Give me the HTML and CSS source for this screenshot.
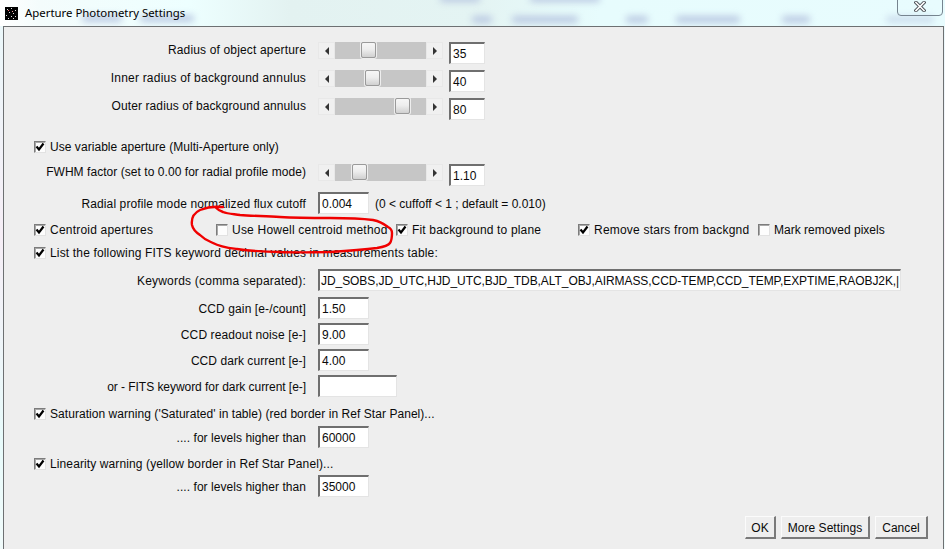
FILE: index.html
```html
<!DOCTYPE html>
<html lang="en">
<head>
<meta charset="utf-8">
<title>Aperture Photometry Settings</title>
<link rel="stylesheet" href="styles.css">
</head>
<body>
<div class="window">
  <div class="titlebar">
    <span class="blob b1"></span><span class="blob b2"></span><span class="blob b3"></span><span class="blob b4"></span><span class="blob b5"></span><span class="blob b6"></span><span class="blob b7"></span><span class="blob b8"></span><span class="blob b9"></span><span class="blob b10"></span>
    <svg class="appicon" width="13" height="13" viewBox="0 0 13 13"><rect width="13" height="13" fill="#000"/><g fill="#ddd"><rect x="2" y="2" width="1" height="1"/><rect x="6" y="1" width="1" height="1"/><rect x="10" y="3" width="1" height="1"/><rect x="4" y="5" width="1" height="1"/><rect x="8" y="6" width="1" height="1"/><rect x="1" y="8" width="1" height="1"/><rect x="6" y="9" width="1" height="1"/><rect x="10" y="9" width="1" height="1"/><rect x="3" y="11" width="1" height="1"/><rect x="8" y="11" width="1" height="1"/></g><rect x="3" y="3" width="1" height="1" fill="#e66"/><rect x="7" y="4" width="1" height="1" fill="#e99"/></svg>
    <span class="title-text">Aperture Photometry Settings</span>
    <div class="close">
      <svg width="12" height="11" viewBox="0 0 12 11"><path d="M2 1.5 L10 9.5 M10 1.5 L2 9.5" stroke="#4a4f55" stroke-width="3.4" stroke-linecap="square"/><path d="M2 1.5 L10 9.5 M10 1.5 L2 9.5" stroke="#fff" stroke-width="1.6" stroke-linecap="square"/></svg>
    </div>
  </div>

  <div class="panel">
    <div class="row slider-row">
      <span class="label short ls-m">Radius of object aperture</span>
      <div class="slider"><span class="arrow left"></span><div class="track"><span class="thumb" style="left:26px"></span></div><span class="arrow right"></span></div>
      <div class="field f-num">35</div>
    </div>
    <div class="row slider-row gap6">
      <span class="label short ls-l">Inner radius of background annulus</span>
      <div class="slider"><span class="arrow left"></span><div class="track"><span class="thumb" style="left:30px"></span></div><span class="arrow right"></span></div>
      <div class="field f-num">40</div>
    </div>
    <div class="row slider-row gap6">
      <span class="label short ls-s">Outer radius of background annulus</span>
      <div class="slider"><span class="arrow left"></span><div class="track"><span class="thumb" style="left:60px"></span></div><span class="arrow right"></span></div>
      <div class="field f-num">80</div>
    </div>

    <div class="checks gap19">
      <label class="check ls-t"><span class="box on"><svg width="10" height="10" viewBox="0 0 10 10"><path d="M1.5 4.5 L4 7.5 L8.5 1.5" fill="none" stroke="#000" stroke-width="2.2"/></svg></span>Use variable aperture (Multi-Aperture only)</label>
    </div>

    <div class="row slider-row gap9">
      <span class="label short ls-t">FWHM factor (set to 0.00 for radial profile mode)</span>
      <div class="slider"><span class="arrow left"></span><div class="track"><span class="thumb" style="left:17px"></span></div><span class="arrow right"></span></div>
      <div class="field f-num">1.10</div>
    </div>

    <div class="row gap6">
      <span class="label ls-s">Radial profile mode normalized flux cutoff</span>
      <div class="field f-mid">0.004</div>
      <span class="hint">(0 &lt; cuffoff &lt; 1 ; default = 0.010)</span>
    </div>

    <div class="checks five gap7">
      <label class="check ls-l"><span class="box on"><svg width="10" height="10" viewBox="0 0 10 10"><path d="M1.5 4.5 L4 7.5 L8.5 1.5" fill="none" stroke="#000" stroke-width="2.2"/></svg></span>Centroid apertures</label>
      <label class="check ls-l"><span class="box"></span>Use Howell centroid method</label>
      <label class="check ls-m"><span class="box on"><svg width="10" height="10" viewBox="0 0 10 10"><path d="M1.5 4.5 L4 7.5 L8.5 1.5" fill="none" stroke="#000" stroke-width="2.2"/></svg></span>Fit background to plane</label>
      <label class="check ls-l"><span class="box on"><svg width="10" height="10" viewBox="0 0 10 10"><path d="M1.5 4.5 L4 7.5 L8.5 1.5" fill="none" stroke="#000" stroke-width="2.2"/></svg></span>Remove stars from backgnd</label>
      <label class="check"><span class="box"></span>Mark removed pixels</label>
    </div>

    <div class="checks gap8">
      <label class="check ls-m"><span class="box on"><svg width="10" height="10" viewBox="0 0 10 10"><path d="M1.5 4.5 L4 7.5 L8.5 1.5" fill="none" stroke="#000" stroke-width="2.2"/></svg></span>List the following FITS keyword decimal values in measurements table:</label>
    </div>

    <div class="row gap8">
      <span class="label ls-l">Keywords (comma separated):</span>
      <div class="field f-wide">JD_SOBS,JD_UTC,HJD_UTC,BJD_TDB,ALT_OBJ,AIRMASS,CCD-TEMP,CCD_TEMP,EXPTIME,RAOBJ2K,|</div>
    </div>
    <div class="row gap6"><span class="label ls-s">CCD gain [e-/count]</span><div class="field f-mid">1.50</div></div>
    <div class="row gap4"><span class="label ls-s">CCD readout noise [e-]</span><div class="field f-mid">9.00</div></div>
    <div class="row gap4"><span class="label ls-t">CCD dark current [e-]</span><div class="field f-mid">4.00</div></div>
    <div class="row gap4"><span class="label ls-n">or - FITS keyword for dark current [e-]</span><div class="field f-long"></div></div>

    <div class="checks gap9">
      <label class="check ls-t"><span class="box on"><svg width="10" height="10" viewBox="0 0 10 10"><path d="M1.5 4.5 L4 7.5 L8.5 1.5" fill="none" stroke="#000" stroke-width="2.2"/></svg></span>Saturation warning ('Saturated' in table) (red border in Ref Star Panel)...</label>
    </div>
    <div class="row gap4"><span class="label ls-t">.... for levels higher than</span><div class="field f-mid">60000</div></div>

    <div class="checks gap8">
      <label class="check ls-s"><span class="box on"><svg width="10" height="10" viewBox="0 0 10 10"><path d="M1.5 4.5 L4 7.5 L8.5 1.5" fill="none" stroke="#000" stroke-width="2.2"/></svg></span>Linearity warning (yellow border in Ref Star Panel)...</label>
    </div>
    <div class="row gap3"><span class="label ls-t">.... for levels higher than</span><div class="field f-mid">35000</div></div>

    <div class="buttons">
      <button class="btn b-ok">OK</button>
      <button class="btn b-more">More Settings</button>
      <button class="btn b-cancel">Cancel</button>
    </div>
  </div>

  <svg class="scribble" width="945" height="549" viewBox="0 0 945 549"><path d="M223 207 C214 206 205 208 200 210 C194 213 191 218 192 225 C193 230 197 233 200 235 C205 240 209 241 213 243 C220 247 229 248 237 249 C252 251 265 252 280 252 C297 253 314 252 330 252 C347 251 362 250 377 248 C383 247 388 246 390 243 C392 240 392 236 392 233 C392 230 390 228 388 227 C383 223 378 221 373 220 C358 218 345 218 330 218 C313 218 297 218 280 217 C266 216 253 216 240 215 C234 214 228 214 223 212 C220 211 217 209 215 207" fill="none" stroke="#f00000" stroke-width="2.4" stroke-linecap="round" stroke-linejoin="round"/></svg>
</div>
</body>
</html>
```

FILE: styles.css
```css
* { box-sizing: border-box; }
html, body { margin: 0; padding: 0; }
body {
  width: 945px;
  height: 549px;
  overflow: hidden;
  background: linear-gradient(180deg, #eaf9fb 0%, #f6eef6 43%, #e8fbfb 80%, #f1fbfb 100%);
  font-family: "Liberation Sans", Arial, sans-serif;
  font-size: 12px;
  color: #0a0a0a;
}
.window {
  position: relative;
  width: 945px;
  height: 549px;
  display: flex;
  flex-direction: column;
}

/* title bar */
.titlebar {
  position: relative;
  flex: 0 0 26px;
  display: flex;
  align-items: center;
  padding-left: 5px;
  overflow: hidden;
  background: linear-gradient(90deg, #ffffff 0, #f4fcfc 40px, #edffff 190px, #e3f2f1 290px, #e4f4f3 480px, #e7fcfd 600px, #e8fcfe 945px);
}
.appicon { flex: none; position: relative; }
.title-text {
  position: relative;
  margin-left: 7px;
  margin-top: -1px;
  font-family: "Noto Sans", sans-serif;
  font-size: 11.4px;
  color: #000;
}
.blob {
  position: absolute;
  height: 7px;
  background: #bac9e2;
  filter: blur(3.5px);
  border-radius: 3px;
}
.b1 { left: 82px; width: 40px; top: 15px; }
.b2 { left: 140px; width: 54px; top: 15px; }
.b3 { left: 472px; width: 20px; top: 16px; }
.b4 { left: 512px; width: 66px; top: 16px; }
.b5 { left: 626px; width: 22px; top: 16px; }
.b6 { left: 676px; width: 64px; top: 16px; }
.b7 { left: 782px; width: 28px; top: 16px; }
.b8 { left: 886px; width: 48px; top: 16px; opacity: .6; }
.b9 { left: 440px; width: 40px; top: -5px; }
.b10 { left: 530px; width: 70px; top: -5px; }
.close {
  position: absolute;
  left: 897px;
  top: -4px;
  width: 46px;
  height: 20px;
  border: 1px solid #76848f;
  border-radius: 0 0 4px 4px;
  display: flex;
  align-items: flex-end;
  justify-content: center;
  padding-bottom: 3px;
}

/* dialog panel */
.panel {
  flex: 1;
  margin-left: 3px;
  margin-right: 1px;
  padding: 15px 15px 0 0;
  background: #eeeeee;
  border: 1px solid #6d7072;
  border-bottom: 0;
  display: flex;
  flex-direction: column;
}
.row {
  display: flex;
  align-items: center;
  height: 22px;
  flex: none;
}
.slider-row { align-items: flex-start; }
.label {
  flex: 0 0 302px;
  text-align: right;
  white-space: nowrap;
  line-height: 24px;
  height: 22px;
}
.label.short { line-height: 16px; }
.row > .label { margin-right: 12px; }

/* fitted text widths of the original's hinted font */
.ls-n { letter-spacing: -0.05px; }
.ls-t { letter-spacing: 0.05px; }
.ls-s { letter-spacing: 0.11px; }
.ls-m { letter-spacing: 0.16px; }
.ls-l { letter-spacing: 0.21px; }

.gap3 { margin-top: 3px; }
.gap4 { margin-top: 4px; }
.gap6 { margin-top: 6px; }
.gap7 { margin-top: 7px; }
.gap8 { margin-top: 8px; }
.gap9 { margin-top: 9px; }
.gap19 { margin-top: 19px; }

/* slider */
.slider {
  flex: 0 0 125px;
  height: 17px;
  display: flex;
  margin-right: 6px;
}
.arrow {
  flex: 0 0 17px;
  background: #f0f0f0;
  border: 1px solid #e8e8e8;
  display: flex;
  align-items: center;
  justify-content: center;
}
.arrow::before {
  content: "";
  width: 0;
  height: 0;
  border-top: 4px solid transparent;
  border-bottom: 4px solid transparent;
}
.arrow.left::before { border-right: 4px solid #333; }
.arrow.right::before { border-left: 4px solid #333; }
.track {
  position: relative;
  flex: 1;
  background: #c6c6c6;
}
.thumb {
  position: absolute;
  top: 0;
  width: 15px;
  height: 16px;
  background: linear-gradient(180deg, #f6f6f6 0%, #eeeeee 45%, #d0d0d0 100%);
  border: 1px solid #9a9a9a;
  border-radius: 2px;
  box-shadow: 0 0 0 1px #eeeeee;
}

/* text fields */
.field {
  flex: none;
  height: 22px;
  line-height: 20px;
  padding-left: 2px;
  background: #fff;
  border-style: solid;
  border-width: 2px 1px 1px 2px;
  border-color: #6f6f6f #e4e4e4 #e4e4e4 #6f6f6f;
  white-space: nowrap;
  overflow: hidden;
}
.f-num { width: 36px; }
.f-mid { width: 51px; }
.f-long { width: 79px; }
.f-wide { width: 583px; letter-spacing: -0.07px; padding-left: 1px; }
.hint { margin-left: 6px; margin-top: 1px; white-space: nowrap; }

/* check boxes */
.checks {
  flex: none;
  height: 16px;
  padding-left: 30px;
  display: flex;
  align-items: center;
}
.checks.five {
  display: grid;
  grid-template-columns: 182px 180px 182px 180px 1fr;
}
.check {
  display: flex;
  align-items: center;
  white-space: nowrap;
  line-height: 18px;
}
.box {
  flex: none;
  width: 12px;
  height: 12px;
  margin-right: 4px;
  background: #fdfdfd;
  border-style: solid;
  border-width: 1px;
  border-color: #7c7c7c #e2e2e2 #e2e2e2 #7c7c7c;
  box-shadow: inset 1px 1px 0 #a8a8a8;
  display: flex;
  align-items: center;
  justify-content: center;
}

/* buttons */
.buttons {
  flex: none;
  margin-top: 19px;
  display: flex;
  justify-content: flex-end;
  gap: 5px;
}
.btn {
  height: 23px;
  padding: 2px 0 0;
  font: inherit;
  letter-spacing: 0.05px;
  color: inherit;
  background: #eeeeee;
  border-style: solid;
  border-width: 1px 2px 2px 1px;
  border-color: #fbfbfb #7a7a7a #7a7a7a #fbfbfb;
}
.b-ok { width: 31px; }
.b-more { width: 89px; }
.b-cancel { width: 53px; }

/* hand-drawn annotation */
.scribble {
  position: absolute;
  left: 0;
  top: 0;
  pointer-events: none;
}
```
